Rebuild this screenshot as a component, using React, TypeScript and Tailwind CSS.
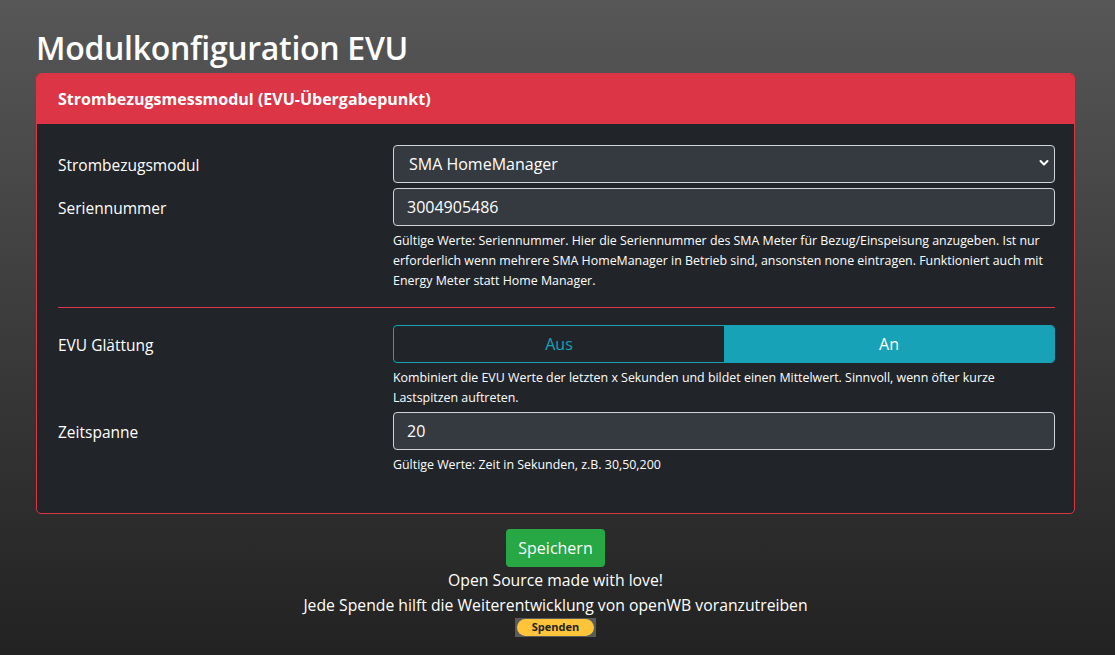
import { useState } from 'react';

const font = "font-['Open_Sans','Noto_Sans',sans-serif]";

function Row({ label, children }: { label: string; children: React.ReactNode }) {
  return (
    <div className="grid grid-cols-[335px_1fr] items-start">
      <div className="h-[38px] pt-[3px] flex items-center text-[15.5px]">{label}</div>
      <div>{children}</div>
    </div>
  );
}

function Help({ children }: { children: React.ReactNode }) {
  return <p className="text-[12.4px] leading-[20px] mt-[5px] pr-2">{children}</p>;
}

export default function App() {
  const [smooth, setSmooth] = useState(true);

  return (
    <div className={`${font} min-h-[655px] bg-gradient-to-b from-[#575757] to-[#222222] text-white`}>
      <div className="pl-[36px] pr-[40px] pt-[26px] pb-4">
        <h1 className="text-[32px] leading-[44px] font-semibold tracking-[-0.3px] mb-[3px]">Modulkonfiguration EVU</h1>

        <div className="border border-[#dc3545] rounded-[5px] overflow-hidden bg-[#212529]">
          <div className="bg-[#dc3545] h-[50px] flex items-center px-[21px] text-[16px] font-bold">
            Strombezugsmessmodul (EVU-Übergabepunkt)
          </div>

          <div className="pl-[21px] pr-[19px] pt-[21px] pb-[38px]">
            <Row label="Strombezugsmodul">
              <div className="relative">
                <select className="w-full h-[38px] appearance-none bg-[#343a40] border border-[#ced4da] rounded-[4px] pl-[15px] text-[16px] text-white outline-none">
                  <option>SMA HomeManager</option>
                </select>
                <svg className="absolute right-[6px] top-[14px] pointer-events-none" width="10" height="8" viewBox="0 0 10 8">
                  <path d="M1.5 2 L5 5.5 L8.5 2" fill="none" stroke="white" strokeWidth="2" strokeLinecap="round" strokeLinejoin="round" />
                </svg>
              </div>
            </Row>

            <div className="mt-[5px]">
              <Row label="Seriennummer">
                <input
                  defaultValue="3004905486"
                  className="w-full h-[38px] bg-[#343a40] border border-[#ced4da] rounded-[4px] px-[13px] text-[16px] text-white outline-none"
                />
                <Help>
                  Gültige Werte: Seriennummer. Hier die Seriennummer des SMA Meter für Bezug/Einspeisung anzugeben. Ist nur
                  erforderlich wenn mehrere SMA HomeManager in Betrieb sind, ansonsten none eintragen. Funktioniert auch mit
                  Energy Meter statt Home Manager.
                </Help>
              </Row>
            </div>

            <div className="border-t border-[#dc3545] mt-[16px] mb-[17px]" />

            <Row label="EVU Glättung">
              <div className="grid grid-cols-2 h-[38px] rounded-[4px] overflow-hidden border border-[#17a2b8]">
                <button
                  onClick={() => setSmooth(false)}
                  className={`text-[16px] ${smooth ? 'text-[#17a2b8] bg-transparent' : 'bg-[#17a2b8] text-white'}`}
                >
                  Aus
                </button>
                <button
                  onClick={() => setSmooth(true)}
                  className={`text-[16px] ${smooth ? 'bg-[#17a2b8] text-white' : 'text-[#17a2b8] bg-transparent'}`}
                >
                  An
                </button>
              </div>
              <Help>
                Kombiniert die EVU Werte der letzten x Sekunden und bildet einen Mittelwert. Sinnvoll, wenn öfter kurze
                Lastspitzen auftreten.
              </Help>
            </Row>

            <div className="mt-[4px]">
              <Row label="Zeitspanne">
                <input
                  defaultValue="20"
                  className="w-full h-[38px] bg-[#343a40] border border-[#ced4da] rounded-[4px] px-[13px] text-[16px] text-white outline-none"
                />
                <Help>Gültige Werte: Zeit in Sekunden, z.B. 30,50,200</Help>
              </Row>
            </div>
          </div>
        </div>

        <div className="flex flex-col items-center mt-[15px] text-[15.75px]">
          <button className="bg-[#28a745] rounded-[4px] h-[38px] px-[12px] text-[16px]">Speichern</button>
          <p className="leading-[25px] mt-[1px]">Open Source made with love!</p>
          <p className="leading-[25px]">Jede Spende hilft die Weiterentwicklung von openWB voranzutreiben</p>
          <div className="bg-[#5a5a5a] px-[2px] py-[1px]">
            <div className="bg-[#ffc439] rounded-full w-[77px] h-[17px] flex items-center justify-center text-[11px] font-bold text-[#222]">
              Spenden
            </div>
          </div>
        </div>
      </div>
    </div>
  );
}
